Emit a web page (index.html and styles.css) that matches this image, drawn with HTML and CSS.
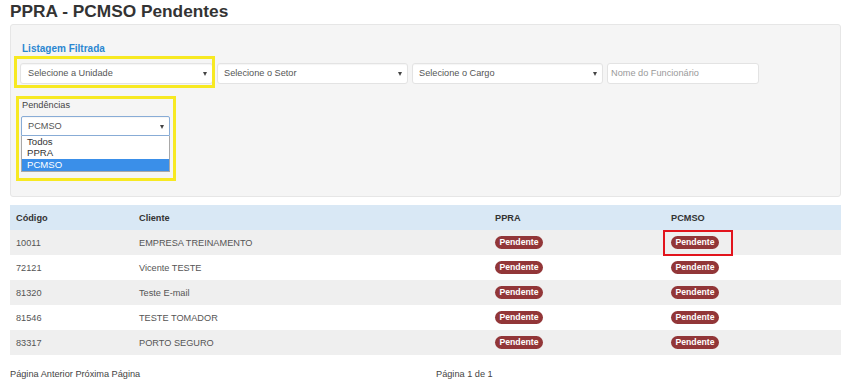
FILE: index.html
```html
<!DOCTYPE html>
<html lang="pt-BR">
<head>
  <meta charset="UTF-8">
  <title>PPRA - PCMSO Pendentes</title>
  <link rel="stylesheet" href="styles.css">
</head>
<body>
  <h1 class="page-title">PPRA - PCMSO Pendentes</h1>

  <div class="filter-panel">
    <div class="panel-heading">Listagem Filtrada</div>

    <div class="filter-row">
      <div class="fake-select w-unit mark-yellow mark-unit">Selecione a Unidade<span class="caret"></span></div>
      <div class="fake-select w-mid">Selecione o Setor<span class="caret"></span></div>
      <div class="fake-select w-mid">Selecione o Cargo<span class="caret"></span></div>
      <div class="text-input">Nome do Funcionário</div>
    </div>

    <div class="pend-group mark-yellow mark-pend">
      <div class="pend-label">Pendências</div>
      <div class="fake-select focused">PCMSO<span class="caret"></span></div>
      <ul class="option-list">
        <li>Todos</li>
        <li>PPRA</li>
        <li class="selected">PCMSO</li>
      </ul>
    </div>
  </div>

  <table class="pend-table">
    <colgroup>
      <col class="c-code"><col class="c-client"><col class="c-ppra"><col class="c-pcmso">
    </colgroup>
    <thead>
      <tr><th>Código</th><th>Cliente</th><th>PPRA</th><th>PCMSO</th></tr>
    </thead>
    <tbody>
      <tr><td>10011</td><td>EMPRESA TREINAMENTO</td><td><span class="badge">Pendente</span></td><td><span class="badge mark-red">Pendente</span></td></tr>
      <tr><td>72121</td><td>Vicente TESTE</td><td><span class="badge">Pendente</span></td><td><span class="badge">Pendente</span></td></tr>
      <tr><td>81320</td><td>Teste E-mail</td><td><span class="badge">Pendente</span></td><td><span class="badge">Pendente</span></td></tr>
      <tr><td>81546</td><td>TESTE TOMADOR</td><td><span class="badge">Pendente</span></td><td><span class="badge">Pendente</span></td></tr>
      <tr><td>83317</td><td>PORTO SEGURO</td><td><span class="badge">Pendente</span></td><td><span class="badge">Pendente</span></td></tr>
    </tbody>
  </table>

  <div class="pager">
    <span>Página Anterior Próxima Página</span>
    <span>Página 1 de 1</span>
  </div>
</body>
</html>
```

FILE: styles.css
```css
/* Global */
body {
  margin: 0;
  padding: 0;
  background: #fff;
  font-family: "Liberation Sans", Arial, sans-serif;
  font-size: 9.2px;
  color: #555;
}

.page-title {
  margin: 0 0 3px;
  padding: 1px 0 0 10px;
  font-size: 17.3px;
  line-height: 20px;
  font-weight: bold;
  color: #333;
}

/* Filter panel */
.filter-panel {
  margin: 0 8px 0 10px;
  padding: 18px 9px 24px;
  background: #f5f5f5;
  border: 1px solid #e6e6e6;
  border-radius: 3px;
}
.panel-heading {
  padding-left: 2px;
  font-size: 10px;
  line-height: 12px;
  font-weight: bold;
  color: #2b87d1;
}

.filter-row {
  margin-top: 8px;
  display: flex;
  gap: 4px;
}

.fake-select {
  position: relative;
  box-sizing: border-box;
  height: 21px;
  padding: 0 6px;
  background: #fff;
  border: 1px solid #e3e3e3;
  border-radius: 3px;
  box-shadow: inset 0 1px 1px rgba(0, 0, 0, 0.04);
  line-height: 19px;
  color: #555;
}
.w-unit { width: 193px; padding-left: 7px; }
.w-mid { width: 191px; }
.caret {
  position: absolute;
  right: 5px;
  top: 8px;
  border-left: 2.5px solid transparent;
  border-right: 2.5px solid transparent;
  border-top: 4px solid #444;
}

.text-input {
  box-sizing: border-box;
  width: 152px;
  height: 21px;
  padding: 0 3px;
  background: #fff;
  border: 1px solid #e3e3e3;
  border-radius: 3px;
  line-height: 19px;
  color: #9a9a9a;
}

/* Pendencias */
.pend-group {
  width: 149px;
  margin: 15px 0 0 1px;
}
.pend-label {
  padding-left: 1px;
  line-height: 12px;
  color: #444;
}
.pend-group .fake-select {
  margin-top: 5px;
  height: 20px;
  line-height: 18px;
  border-color: #88acd6;
  border-radius: 2px 2px 0 0;
}
.option-list {
  list-style: none;
  margin: 0;
  padding: 0;
  background: #fff;
  border: 1px solid #a8a8a8;
  border-top: none;
  font-size: 9.6px;
  color: #333;
}
.option-list li {
  height: 12px;
  line-height: 12px;
  padding-left: 5px;
}
.option-list li:first-child { height: 11px; line-height: 11px; }
.option-list .selected {
  background: #3a8fe9;
  color: #fff;
}

/* Annotation marks */
.mark-yellow, .mark-red { position: relative; }
.mark-yellow::before, .mark-red::after {
  content: "";
  position: absolute;
  pointer-events: none;
}
.mark-yellow::before { border: 3px solid #f7e922; }
.mark-unit::before { left: -7px; right: -3px; top: -8px; bottom: -5px; }
.mark-pend::before { left: -5px; right: -6px; top: -3px; bottom: -9px; }
.mark-red::after {
  left: -8px;
  right: -14px;
  top: -6px;
  bottom: -7px;
  border: 2px solid #e2141c;
}

/* Table */
.pend-table {
  margin: 8px 8px 0 10px;
  width: 831px;
  border-collapse: collapse;
  table-layout: fixed;
}
.c-code { width: 123px; }
.c-client { width: 356px; }
.c-ppra { width: 176px; }
.c-pcmso { width: 176px; }

.pend-table th, .pend-table td {
  height: 25px;
  padding: 0 6px;
  text-align: left;
  vertical-align: middle;
}
.pend-table th {
  background: #d9e8f5;
  color: #333;
  font-weight: bold;
}
.pend-table tbody tr:nth-child(odd) { background: #efefef; }

.badge {
  display: inline-block;
  width: 48px;
  height: 13px;
  box-sizing: border-box;
  border-radius: 6.5px;
  background: #923638;
  color: #fff;
  font-size: 8.7px;
  font-weight: bold;
  line-height: 13px;
  text-align: center;
  vertical-align: middle;
}

/* Pager */
.pager {
  margin-top: 13px;
  padding-left: 10px;
  display: grid;
  grid-template-columns: 426px 1fr;
  line-height: 12px;
  color: #444;
}
```
